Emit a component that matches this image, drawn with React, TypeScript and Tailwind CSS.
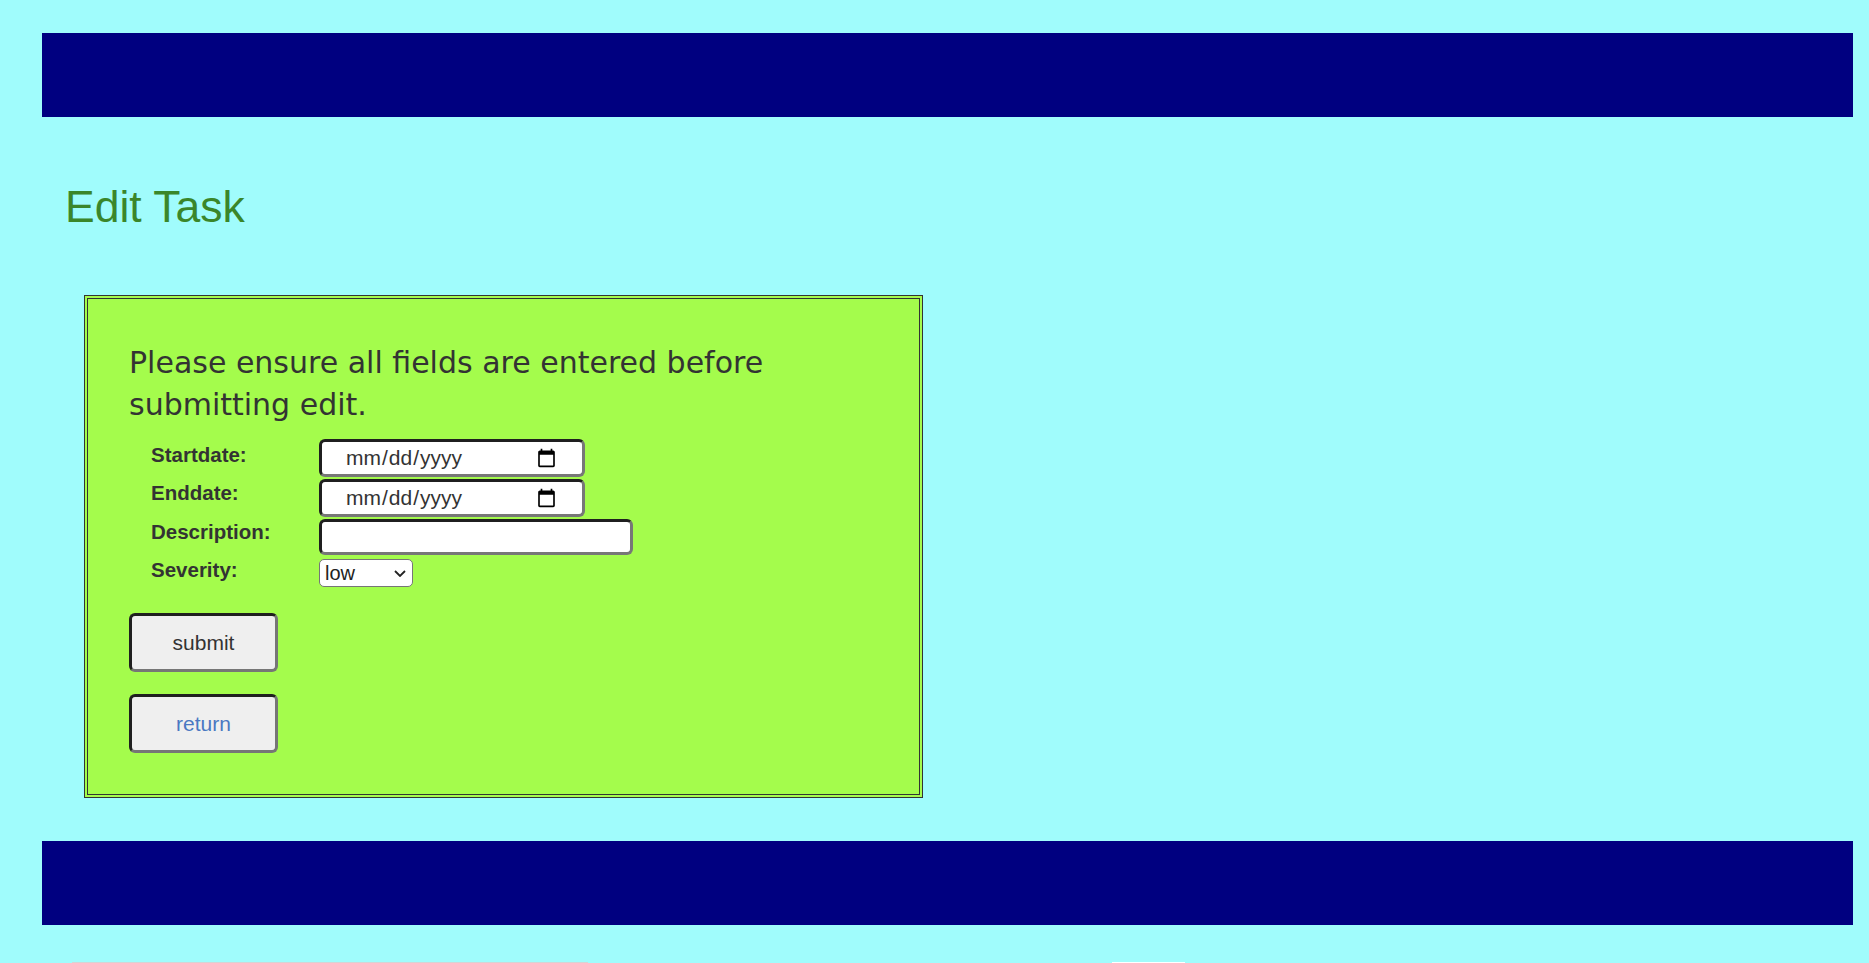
import React from "react";

export default function App() {
  const arial = { fontFamily: '"Liberation Sans", Arial, sans-serif' };
  return (
    <div className="min-h-[963px] w-full bg-[#a0fcfc] pt-[33px] overflow-hidden" style={arial}>
      <header className="ml-[42px] mr-[16px] h-[84px] bg-[#000080]" />

      <h1 className="ml-[65px] mt-[65px] text-[44.5px] leading-[50px] font-normal text-[#3a862a] [font-family:'Liberation_Sans',Arial,sans-serif]">
        Edit Task
      </h1>

      <main className="ml-[84px] mt-[63px] w-[839px] border-[4px] border-double border-[#333] bg-[#a4fc4c] pl-[41px] pr-[41px] pt-[43px] pb-[41px]">
        <p className="text-[30px] leading-[42px] text-[#333] [font-family:'DejaVu_Sans',Verdana,sans-serif]">
          Please ensure all fields are entered before submitting edit.
        </p>

        <form className="mt-[10px]" onSubmit={(e) => e.preventDefault()}>
          <div className="flex items-start">
            <div className="ml-[22px] flex w-[168px] flex-col text-[20.5px] font-bold leading-[38.3px] text-[#333]">
              <label>Startdate:</label>
              <label>Enddate:</label>
              <label>Description:</label>
              <label>Severity:</label>
            </div>
            <div className="mt-[3px] flex flex-col items-start">
              <input
                type="date"
                className="h-[38px] w-[266px] rounded-[6px] border-[3px] border-t-[#1f1f1f] border-l-[#1f1f1f] border-b-[#777] border-r-[#777] bg-white px-[23px] text-[21px] text-[#333]"
              />
              <input
                type="date"
                className="mt-[2px] h-[38px] w-[266px] rounded-[6px] border-[3px] border-t-[#1f1f1f] border-l-[#1f1f1f] border-b-[#777] border-r-[#777] bg-white px-[23px] text-[21px] text-[#333]"
              />
              <input
                type="text"
                className="mt-[2px] h-[36px] w-[314px] rounded-[6px] border-[3px] border-t-[#1f1f1f] border-l-[#1f1f1f] border-b-[#777] border-r-[#777] bg-white px-[4px] text-[20px] text-[#333]"
              />
              <div className="relative mt-[4px]">
                <select
                  defaultValue="low"
                  className="h-[28px] w-[94px] appearance-none rounded-[5px] border border-[#767676] bg-white pl-[5px] text-[20px] leading-[26px] text-[#222]"
                >
                  <option value="low">low</option>
                  <option value="medium">medium</option>
                  <option value="high">high</option>
                </select>
                <svg
                  className="pointer-events-none absolute right-[7px] top-[11px]"
                  width="12"
                  height="7"
                  viewBox="0 0 12 7"
                >
                  <path d="M1 1 L6 6 L11 1" fill="none" stroke="#222" strokeWidth="1.8" />
                </svg>
              </div>
            </div>
          </div>

          <button
            type="submit"
            className="mt-[24px] block h-[59px] w-[149px] rounded-[6px] border-[3px] border-t-[#1f1f1f] border-l-[#1f1f1f] border-b-[#767676] border-r-[#767676] bg-[#efefef] text-[21px] text-[#333]"
          >
            submit
          </button>
          <button
            type="button"
            className="mt-[22px] block h-[59px] w-[149px] rounded-[6px] border-[3px] border-t-[#1f1f1f] border-l-[#1f1f1f] border-b-[#767676] border-r-[#767676] bg-[#efefef] text-[21px] text-[#4a78c2]"
          >
            return
          </button>
        </form>
      </main>

      <footer className="ml-[42px] mr-[16px] mt-[43px] h-[84px] bg-[#000080]" />

      <div className="mt-[37px] flex h-[20px]">
        <div className="ml-[72px] h-full w-[516px] bg-[#d4d4d4]" />
        <div className="ml-[524px] h-full w-[73px] bg-white" />
      </div>
    </div>
  );
}
